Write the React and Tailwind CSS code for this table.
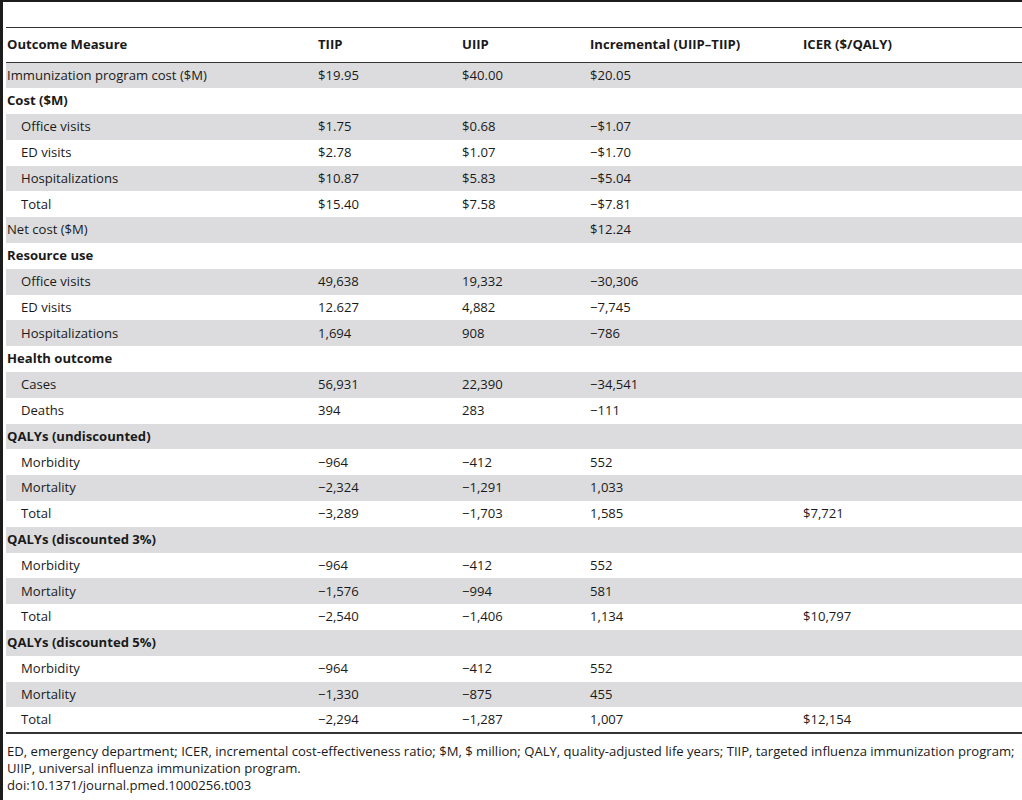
import React from "react";

const rows = [
  { label: "Immunization program cost ($M)", tiip: "$19.95", uiip: "$40.00", inc: "$20.05" },
  { label: "Cost ($M)", head: true },
  { label: "Office visits", sub: true, tiip: "$1.75", uiip: "$0.68", inc: "\u2212$1.07" },
  { label: "ED visits", sub: true, tiip: "$2.78", uiip: "$1.07", inc: "\u2212$1.70" },
  { label: "Hospitalizations", sub: true, tiip: "$10.87", uiip: "$5.83", inc: "\u2212$5.04" },
  { label: "Total", sub: true, tiip: "$15.40", uiip: "$7.58", inc: "\u2212$7.81" },
  { label: "Net cost ($M)", inc: "$12.24" },
  { label: "Resource use", head: true },
  { label: "Office visits", sub: true, tiip: "49,638", uiip: "19,332", inc: "\u221230,306" },
  { label: "ED visits", sub: true, tiip: "12.627", uiip: "4,882", inc: "\u22127,745" },
  { label: "Hospitalizations", sub: true, tiip: "1,694", uiip: "908", inc: "\u2212786" },
  { label: "Health outcome", head: true },
  { label: "Cases", sub: true, tiip: "56,931", uiip: "22,390", inc: "\u221234,541" },
  { label: "Deaths", sub: true, tiip: "394", uiip: "283", inc: "\u2212111" },
  { label: "QALYs (undiscounted)", head: true },
  { label: "Morbidity", sub: true, tiip: "\u2212964", uiip: "\u2212412", inc: "552" },
  { label: "Mortality", sub: true, tiip: "\u22122,324", uiip: "\u22121,291", inc: "1,033" },
  { label: "Total", sub: true, tiip: "\u22123,289", uiip: "\u22121,703", inc: "1,585", icer: "$7,721" },
  { label: "QALYs (discounted 3%)", head: true },
  { label: "Morbidity", sub: true, tiip: "\u2212964", uiip: "\u2212412", inc: "552" },
  { label: "Mortality", sub: true, tiip: "\u22121,576", uiip: "\u2212994", inc: "581" },
  { label: "Total", sub: true, tiip: "\u22122,540", uiip: "\u22121,406", inc: "1,134", icer: "$10,797" },
  { label: "QALYs (discounted 5%)", head: true },
  { label: "Morbidity", sub: true, tiip: "\u2212964", uiip: "\u2212412", inc: "552" },
  { label: "Mortality", sub: true, tiip: "\u22121,330", uiip: "\u2212875", inc: "455" },
  { label: "Total", sub: true, tiip: "\u22122,294", uiip: "\u22121,287", inc: "1,007", icer: "$12,154" },
];

const App = () => {
  return (
    <div
      className="w-[1022px] h-[800px] overflow-hidden bg-white border-l-[3px] border-t-2 border-[#1c1c1c] text-[#1a1a1a] text-[13.1px]"
      style={{ fontFamily: '"Open Sans", "Liberation Sans", sans-serif' }}
    >
      <div className="pl-[3px] pt-[25px]">
        <table className="w-full table-fixed border-collapse">
          <colgroup>
            <col className="w-[312px]" />
            <col className="w-[144px]" />
            <col className="w-[128px]" />
            <col className="w-[213px]" />
            <col />
          </colgroup>
          <thead>
            <tr className="h-[35px] border-t border-b-[1.5px] border-[#333]">
              <th className="text-left font-bold pl-px">Outcome Measure</th>
              <th className="text-left font-bold">TIIP</th>
              <th className="text-left font-bold">UIIP</th>
              <th className="text-left font-bold">Incremental (UIIP&ndash;TIIP)</th>
              <th className="text-left font-bold">ICER ($/QALY)</th>
            </tr>
          </thead>
          <tbody className="border-b-2 border-[#333]">
            {rows.map((r, i) => (
              <tr key={i} className={`h-[25.8px] ${i % 2 === 0 ? "bg-[#dcdcde]" : "bg-white"}`}>
                <td className={`${r.sub ? "pl-[15px]" : "pl-px"} ${r.head ? "font-bold" : ""}`}>{r.label}</td>
                <td>{r.tiip}</td>
                <td>{r.uiip}</td>
                <td>{r.inc}</td>
                <td>{r.icer}</td>
              </tr>
            ))}
          </tbody>
        </table>
        <div className="pt-[9px] pl-px leading-[17px]">
          <p>
            ED, emergency department; ICER, incremental cost-effectiveness ratio; $M, $ million; QALY, quality-adjusted life years; TIIP, targeted influenza immunization program; UIIP, universal influenza immunization program.
          </p>
          <p>doi:10.1371/journal.pmed.1000256.t003</p>
        </div>
      </div>
    </div>
  );
};

export default App;
